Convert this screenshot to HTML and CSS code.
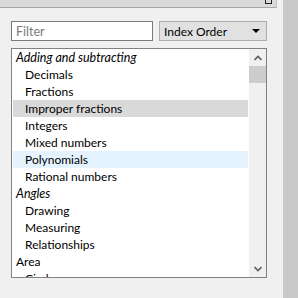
FILE: index.html
```html
<!DOCTYPE html>
<html lang="en">
<head>
  <meta charset="UTF-8">
  <title>Index</title>
  <link rel="stylesheet" href="styles.css">
</head>
<body>
  <div class="window">
    <div class="panel">
      <div class="titlebar">
        <span class="restore"></span>
      </div>
      <div class="controls">
        <input type="text" class="filter" placeholder="Filter">
        <div class="select">
          <span>Index Order</span>
          <span class="caret"></span>
        </div>
      </div>
      <div class="list">
        <div class="rows">
          <div class="row cat">Adding and subtracting</div>
          <div class="row item">Decimals</div>
          <div class="row item">Fractions</div>
          <div class="row item selected">Improper fractions</div>
          <div class="row item">Integers</div>
          <div class="row item">Mixed numbers</div>
          <div class="row item hover">Polynomials</div>
          <div class="row item">Rational numbers</div>
          <div class="row cat">Angles</div>
          <div class="row item">Drawing</div>
          <div class="row item">Measuring</div>
          <div class="row item">Relationships</div>
          <div class="row">Area</div>
          <div class="row item">Circles</div>
        </div>
        <div class="scrollbar">
          <div class="arrow">
            <svg width="8" height="6" viewBox="0 0 8 6"><path d="M0.5 5 L4 1.5 L7.5 5" fill="none" stroke="#606060" stroke-width="1.6"/></svg>
          </div>
          <div class="thumb"></div>
          <div class="track"></div>
          <div class="arrow">
            <svg width="8" height="6" viewBox="0 0 8 6"><path d="M0.5 1 L4 4.5 L7.5 1" fill="none" stroke="#606060" stroke-width="1.6"/></svg>
          </div>
        </div>
      </div>
    </div>
    <div class="strip"></div>
  </div>
</body>
</html>
```

FILE: styles.css
```css
body {
  margin: 0;
  font-family: Lato, "Noto Sans", sans-serif;
  font-size: 12px;
}
.window {
  display: flex;
  width: 298px;
  height: 298px;
  overflow: hidden;
}
.panel {
  width: 283px;
  background: #f0f0f0;
}
.strip {
  flex: 1;
  background: #c9c9c9;
}
.titlebar {
  width: 276px;
  height: 7px;
  background: #dadada;
  border-bottom: 1px solid #a6a6a6;
  border-right: 1px solid #c4c4c4;
  position: relative;
}
.restore {
  position: absolute;
  left: 265px;
  top: -3px;
  width: 5px;
  height: 5px;
  border: 1px solid #202020;
}
.controls {
  display: flex;
  gap: 6px;
  margin: 13px 0 0 11px;
}
.filter {
  box-sizing: border-box;
  width: 142px;
  height: 20px;
  margin: 0;
  padding: 0 4px;
  border: 1px solid #7a7a7a;
  background: #fff;
  font-family: inherit;
  font-size: 12.5px;
  outline: none;
}
.filter::placeholder {
  color: #7a7a7a;
}
.select {
  box-sizing: border-box;
  width: 108px;
  height: 20px;
  display: flex;
  align-items: center;
  justify-content: space-between;
  padding: 0 6px 0 4px;
  background: #e1e1e1;
  border: 1px solid #adadad;
  color: #000;
  font-size: 12px;
}
.caret {
  width: 0;
  height: 0;
  border-left: 4px solid transparent;
  border-right: 4px solid transparent;
  border-top: 4px solid #000;
}
.list {
  box-sizing: border-box;
  display: flex;
  width: 256px;
  height: 230px;
  margin: 7px 0 0 11px;
  padding: 0 0 0 1px;
  background: #fff;
  border: 1px solid #828282;
  overflow: hidden;
}
.rows {
  flex: 1;
  overflow: hidden;
}
.row {
  height: 17px;
  line-height: 17px;
  padding-left: 3px;
  color: #000;
  white-space: nowrap;
}
.row.cat {
  font-style: italic;
  font-size: 12.5px;
}
.row.item {
  padding-left: 12px;
}
.row.selected {
  background: #d9d9d9;
}
.row.hover {
  background: #e5f3ff;
}
.scrollbar {
  width: 17px;
  margin-left: 1px;
  display: flex;
  flex-direction: column;
  background: #f0f0f0;
}
.arrow {
  height: 17px;
  display: flex;
  align-items: center;
  justify-content: center;
}
.thumb {
  height: 17px;
  background: #cdcdcd;
}
.track {
  flex: 1;
}
```
